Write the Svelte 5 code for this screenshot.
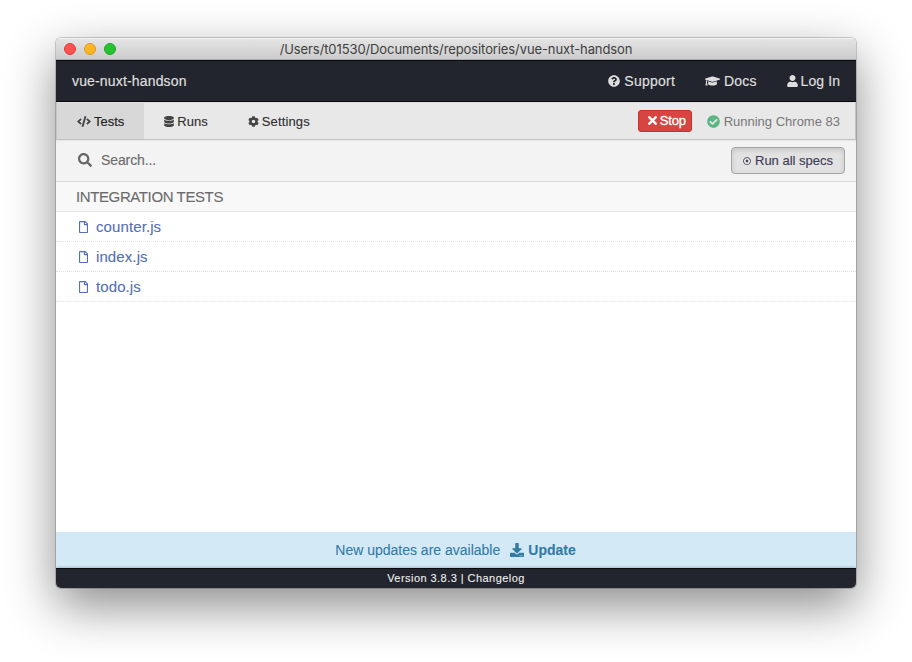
<script>
  const icons = {
    code: { box: '0 0 640 512', d: 'M278.9 511.500l-61-17.700c-6.400-1.800-10-8.500-8.200-14.900L346.200 8.700c1.800-6.400 8.500-10 14.900-8.200l61 17.700c6.400 1.800 10 8.500 8.200 14.900L293.800 503.300c-1.900 6.400-8.500 10.100-14.900 8.200zm-114-112.200l43.500-46.400c4.600-4.900 4.300-12.700-.8-17.200L117 256l90.600-79.700c5.100-4.500 5.500-12.300.8-17.200l-43.500-46.400c-4.500-4.800-12.100-5.100-17-.5L3.800 247.200c-5.100 4.700-5.100 12.800 0 17.500l144.100 135.100c4.900 4.600 12.500 4.400 17-.5zm327.200.6l144.100-135.100c5.100-4.700 5.100-12.800 0-17.500L492.100 112.100c-4.800-4.500-12.400-4.300-17 .5L431.600 159c-4.600 4.900-4.300 12.700.8 17.200L523 256l-90.600 79.700c-5.100 4.500-5.500 12.300-.8 17.200l43.500 46.400c4.500 4.900 12.100 5.100 17 .6z' },
    database: { box: '0 0 448 512', d: 'M448 73.143v45.714C448 159.143 347.667 192 224 192S0 159.143 0 118.857V73.143C0 32.857 100.333 0 224 0s224 32.857 224 73.143zM448 176v102.857C448 319.143 347.667 352 224 352S0 319.143 0 278.857V176c48.125 33.143 136.208 48.572 224 48.572S399.874 209.143 448 176zm0 160v102.857C448 479.143 347.667 512 224 512S0 479.143 0 438.857V336c48.125 33.143 136.208 48.572 224 48.572S399.874 369.143 448 336z' },
    cog: { box: '0 0 512 512', d: 'M487.4 315.7l-42.600-24.600c4.300-23.200 4.300-47 0-70.200l42.600-24.600c4.900-2.800 7.100-8.600 5.500-14-11.100-35.600-30-67.800-54.700-94.600-3.800-4.100-10-5.100-14.800-2.300L380.800 110c-17.900-15.400-38.500-27.300-60.800-35.100V25.800c0-5.600-3.900-10.500-9.400-11.700-36.700-8.200-74.300-7.800-109.200 0-5.500 1.200-9.400 6.100-9.400 11.700V75c-22.200 7.900-42.800 19.800-60.800 35.100L88.700 85.500c-4.900-2.800-11-1.900-14.800 2.300-24.700 26.700-43.600 58.900-54.700 94.600-1.700 5.400.6 11.200 5.500 14L67.300 221c-4.300 23.200-4.300 47 0 70.200l-42.600 24.600c-4.900 2.800-7.100 8.600-5.500 14 11.100 35.600 30 67.800 54.700 94.600 3.800 4.100 10 5.100 14.800 2.300l42.600-24.600c17.900 15.400 38.500 27.300 60.800 35.100v49.200c0 5.600 3.900 10.500 9.400 11.700 36.700 8.200 74.300 7.800 109.200 0 5.500-1.200 9.400-6.100 9.400-11.700v-49.200c22.200-7.900 42.800-19.800 60.800-35.100l42.600 24.600c4.900 2.800 11 1.900 14.800-2.300 24.700-26.700 43.600-58.900 54.700-94.600 1.500-5.500-.7-11.300-5.600-14.100zM256 336c-44.100 0-80-35.900-80-80s35.900-80 80-80 80 35.900 80 80-35.900 80-80 80z' },
    search: { box: '0 0 512 512', d: 'M505 442.700L405.300 343c-4.500-4.500-10.600-7-17-7H372c27.600-35.300 44-79.700 44-128C416 93.100 322.900 0 208 0S0 93.100 0 208s93.100 208 208 208c48.300 0 92.700-16.400 128-44v16.300c0 6.400 2.500 12.500 7 17l99.700 99.700c9.400 9.400 24.600 9.400 33.900 0l28.300-28.300c9.400-9.400 9.400-24.600.1-34zM208 336c-70.700 0-128-57.200-128-128 0-70.700 57.200-128 128-128 70.700 0 128 57.200 128 128 0 70.700-57.200 128-128 128z' },
    question: { box: '0 0 512 512', d: 'M504 256c0 136.997-111.043 248-248 248S8 392.997 8 256C8 119.083 119.043 8 256 8s248 111.083 248 248zM262.655 90c-54.497 0-89.255 22.957-116.549 63.758-3.536 5.286-2.353 12.415 2.715 16.258l34.699 26.310c5.205 3.947 12.621 3.008 16.665-2.122 17.864-22.658 30.113-35.797 57.303-35.797 20.429 0 45.698 13.148 45.698 32.958 0 14.976-12.363 22.667-32.534 33.976C247.128 238.528 216 254.941 216 296v4c0 6.627 5.373 12 12 12h56c6.627 0 12-5.373 12-12v-1.333c0-28.462 83.186-29.647 83.186-106.667 0-58.002-60.165-102-116.531-102zM256 338c-25.365 0-46 20.635-46 46 0 25.364 20.635 46 46 46s46-20.636 46-46c0-25.365-20.635-46-46-46z' },
    cap: { box: '0 0 640 512', d: 'M622.340 153.200L343.400 67.500c-15.200-4.670-31.600-4.670-46.790 0L17.660 153.200c-23.540 7.230-23.540 38.360 0 45.590l48.630 14.940c-10.670 13.190-17.230 29.280-17.880 46.900C38.780 266.150 32 276.110 32 288c0 10.780 5.680 19.850 13.860 25.650L20.330 428.530C18.110 438.520 25.710 448 35.940 448h56.110c10.240 0 17.840-9.480 15.620-19.470L82.140 313.650C90.320 307.850 96 298.780 96 288c0-11.570-6.470-21.250-15.660-26.870.76-15.020 8.440-28.300 20.690-36.720L296.600 284.500c9.060 2.780 26.440 6.250 46.790 0l278.950-85.700c23.550-7.240 23.550-38.360 0-45.600zM352.790 315.090c-28.530 8.760-52.840 3.920-65.590 0l-145.020-44.550L128 384c0 35.350 85.960 64 192 64s192-28.650 192-64l-14.180-113.470-145.030 44.560z' },
    user: { box: '0 0 448 512', d: 'M224 256c70.700 0 128-57.300 128-128S294.700 0 224 0 96 57.300 96 128s57.300 128 128 128zm89.600 32h-16.700c-22.200 10.200-46.900 16-72.900 16s-50.600-5.800-72.900-16h-16.700C60.200 288 0 348.200 0 422.400V464c0 26.500 21.500 48 48 48h352c26.500 0 48-21.500 48-48v-41.600c0-74.200-60.200-134.400-134.400-134.400z' },
    times: { box: '0 80 352 352', d: 'M242.720 256l100.070-100.070c12.280-12.280 12.280-32.190 0-44.480l-22.240-22.240c-12.280-12.280-32.190-12.280-44.480 0L176 189.280 75.930 89.210c-12.280-12.280-32.190-12.280-44.480 0L9.210 111.450c-12.280 12.280-12.280 32.190 0 44.480L109.280 256 9.210 356.070c-12.280 12.280-12.280 32.190 0 44.480l22.240 22.240c12.280 12.280 32.200 12.280 44.480 0L176 322.720l100.070 100.070c12.280 12.280 32.200 12.280 44.480 0l22.240-22.240c12.280-12.280 12.280-32.190 0-44.480L242.720 256z' },
    check: { box: '0 0 512 512', d: 'M504 256c0 136.967-111.033 248-248 248S8 392.967 8 256 119.033 8 256 8s248 111.033 248 248zM227.314 387.314l184-184c6.248-6.248 6.248-16.379 0-22.627l-22.627-22.627c-6.248-6.249-16.379-6.249-22.628 0L216 308.118l-70.059-70.059c-6.248-6.248-16.379-6.248-22.628 0l-22.627 22.627c-6.248 6.248-6.248 16.379 0 22.627l104 104c6.249 6.249 16.379 6.249 22.628.001z' },
    file: { box: '0 0 384 512', d: 'M369.900 97.900L286 14C277 5 264.800-.1 252.100-.1H48C21.500 0 0 21.500 0 48v416c0 26.500 21.500 48 48 48h288c26.500 0 48-21.500 48-48V131.900c0-12.700-5.100-25-14.100-34zM332.100 128H256V51.900l76.100 76.100zM48 464V48h160v104c0 13.300 10.700 24 24 24h104v288H48z' },
    dot: { box: '0 0 512 512', d: 'M256 56c110.532 0 200 89.451 200 200 0 110.532-89.451 200-200 200-110.532 0-200-89.451-200-200 0-110.532 89.451-200 200-200m0-48C119.033 8 8 119.033 8 256s111.033 248 248 248 248-111.033 248-248S392.967 8 256 8zm0 168c-44.183 0-80 35.817-80 80s35.817 80 80 80 80-35.817 80-80-35.817-80-80-80z' },
    download: { box: '0 0 512 512', d: 'M216 0h80c13.300 0 24 10.700 24 24v168h87.700c17.800 0 26.700 21.500 14.100 34.100L269.700 378.300c-7.500 7.500-19.800 7.500-27.300 0L90.100 226.100c-12.600-12.600-3.700-34.100 14.100-34.100H192V24c0-13.300 10.700-24 24-24zm296 376v112c0 13.300-10.700 24-24 24H24c-13.300 0-24-10.700-24-24V376c0-13.300 10.700-24 24-24h146.700l49 49c20.100 20.100 52.500 20.100 72.600 0l49-49H488c13.300 0 24 10.700 24 24zm-124 88c0-11-9-20-20-20s-20 9-20 20 9 20 20 20 20-9 20-20zm64 0c0-11-9-20-20-20s-20 9-20 20 9 20 20 20 20-9 20-20z' }
  };
  const specs = ['counter.js', 'index.js', 'todo.js'];
</script>

{#snippet icon(name)}
  <svg class="icon {name}" viewBox={icons[name].box} aria-hidden="true"><path d={icons[name].d} /></svg>
{/snippet}

<div class="desktop">
  <div class="window">
    <header class="titlebar">
      <div class="lights"><i class="close"></i><i class="min"></i><i class="max"></i></div>
      <span class="path">/Users/t01530/Documents/repositories/vue-nuxt-handson</span>
    </header>
    <nav class="navbar">
      <span class="project">vue-nuxt-handson</span>
      <div class="links">
        <a class="support">{@render icon('question')}<span>Support</span></a>
        <a class="docs">{@render icon('cap')}<span>Docs</span></a>
        <a class="login">{@render icon('user')}<span>Log In</span></a>
      </div>
    </nav>
    <div class="tabs">
      <a class="tab active">{@render icon('code')}<span>Tests</span></a>
      <a class="tab">{@render icon('database')}<span>Runs</span></a>
      <a class="tab settings">{@render icon('cog')}<span>Settings</span></a>
      <div class="status">
        <button class="stop">{@render icon('times')}<span>Stop</span></button>
        <span class="running">{@render icon('check')}<span>Running Chrome 83</span></span>
      </div>
    </div>
    <div class="toolbar">
      <label>{@render icon('search')}<span>Search...</span></label>
      <button class="run-all">{@render icon('dot')}<span>Run all specs</span></button>
    </div>
    <h2><span>INTEGRATION TESTS</span></h2>
    <ul>
      {#each specs as spec}
        <li>{@render icon('file')}<span>{spec}</span></li>
      {/each}
    </ul>
    <div class="update"><span>New updates are available</span>{@render icon('download')}<b>Update</b></div>
    <footer><span>Version 3.8.3 | Changelog</span></footer>
  </div>
</div>

<style>
  :global(body) { margin: 0; background: #fff; }
  .desktop { box-sizing: border-box; width: 912px; height: 662px; padding: 38px 56px; overflow: hidden; background: #fff; }
  .window {
    display: flex; flex-direction: column; width: 800px; height: 550px; overflow: hidden;
    border-radius: 5px; background: #fff; font: 14px "Liberation Sans", Arial, sans-serif;
    box-shadow: 0 0 0 1px rgba(0,0,0,.18), 0 18px 50px rgba(0,0,0,.46);
  }
  span, b { white-space: nowrap; }
  .icon { display: block; flex: none; fill: currentColor; }
  .titlebar {
    position: relative; box-sizing: border-box; height: 22px; flex: none; display: flex; align-items: center; justify-content: center;
    background: linear-gradient(#e4e4e4, #cccccc); border-top: 1px solid #f3f3f3; border-bottom: 1px solid #a9abac;
    font: 13px Inter, sans-serif; color: #404040;
  }
  .path { letter-spacing: -0.1px; }
  .lights { position: absolute; left: 8px; top: 4px; display: flex; gap: 8px; }
  .lights i { box-sizing: border-box; width: 12px; height: 12px; border-radius: 50%; border: 1px solid; }
  .lights .close { background: #fc5350; border-color: #df3d3b; }
  .lights .min { background: #fdb528; border-color: #dd9722; }
  .lights .max { background: #27c232; border-color: #1fa52a; }
  .navbar {
    box-sizing: border-box; height: 42px; flex: none; display: flex; align-items: center; justify-content: space-between;
    padding: 0 16px; background: #22252d; border-top: 1px solid #0c0d10; border-bottom: 1px solid #08090b; color: #dedede;
    -webkit-text-stroke: .2px #dedede;
  }
  .project { letter-spacing: .16px; }
  .links { display: flex; gap: 30px; }
  .links a { display: flex; align-items: center; gap: 3px; }
  .links .support { letter-spacing: .25px; gap: 4px; }
  .links .docs { letter-spacing: .15px; gap: 4px; }
  .login { letter-spacing: .08px; }
  .question { width: 12px; height: 12px; }
  .cap { width: 15px; height: 12px; }
  .user { width: 11px; height: 12px; }
  .tabs {
    box-sizing: border-box; height: 38px; flex: none; display: flex; background: #e8e8e8;
    border: 1px solid #c3c3c3; border-top-color: #dedede; font-size: 13px; color: #333;
    -webkit-text-stroke: .15px;
  }
  .tab { display: flex; align-items: center; gap: 3px; padding: 0 20px; }
  .active { background: #d8d8d8; color: #222; }
  .settings { letter-spacing: .14px; }
  .tab .icon { color: #444; }
  .code { width: 14px; height: 11px; }
  .database { width: 10px; height: 11px; }
  .cog { width: 11px; height: 11px; }
  .status { margin-left: auto; display: flex; align-items: center; gap: 15px; padding-right: 15px; -webkit-text-stroke: 0; }
  button { box-sizing: border-box; margin: 0; font: 13px "Liberation Sans", Arial, sans-serif; display: flex; align-items: center; }
  .stop { height: 22px; width: 54px; padding: 0 5px 2px 9px; gap: 3px; background: #d64541; border: 1px solid #c9302c; border-radius: 3px; color: #fff; letter-spacing: -.1px; -webkit-text-stroke: .3px #fff; }
  .times { width: 9px; height: 9px; }
  .running { display: flex; align-items: center; gap: 4px; color: #777; }
  .check { width: 13px; height: 13px; color: #5db584; }
  .toolbar {
    box-sizing: border-box; height: 42px; flex: none; display: flex; align-items: center; justify-content: space-between;
    padding: 0 11px 0 22px; background: #f3f3f3; border-bottom: 1px solid #d8d8d8; color: #6d6d6d;
    box-shadow: inset 0 2px 2px -1px rgba(0,0,0,.06);
  }
  label { display: flex; align-items: center; gap: 9px; padding-bottom: 2px; letter-spacing: -.1px; -webkit-text-stroke: .15px; }
  .search { width: 14px; height: 14px; color: #666; }
  .run-all { width: 114px; height: 27px; padding: 0 10px 0 11px; gap: 4px; border: 1px solid #a6a6a6; border-radius: 4px; background: #e2e2e2; box-shadow: inset 0 2px 5px rgba(0,0,0,.13); color: #3e3e59; -webkit-text-stroke: .15px; }
  .dot { width: 8px; height: 8px; }
  h2 { box-sizing: border-box; height: 30px; flex: none; margin: 0; padding: 0 20px; display: flex; align-items: center; background: #f8f8f8; border-bottom: 1px solid #e5e5e5; font-size: 15px; font-weight: 400; letter-spacing: -.39px; color: #6b6b6b; -webkit-text-stroke: .1px; }
  ul { flex: 1; margin: 0; padding: 0; list-style: none; }
  li { box-sizing: border-box; height: 30px; display: flex; align-items: center; gap: 8px; padding-left: 23px; border-bottom: 1px dotted #e2e2e2; color: #5370b4; font-size: 15px; letter-spacing: .1px; -webkit-text-stroke: .1px; }
  .file { width: 9px; height: 12px; }
  .update { box-sizing: border-box; height: 36px; flex: none; display: flex; align-items: center; justify-content: center; padding-right: 1px; background: #d4e9f6; color: #317ba5; -webkit-text-stroke: .1px; }
  .download { width: 14px; height: 14px; margin: 0 4px 0 10px; }
  footer { box-sizing: border-box; height: 20px; flex: none; display: flex; align-items: center; justify-content: center; padding-bottom: 2px; background: #22252d; border-top: 1px solid #08090b; box-shadow: 0 -1px 2px rgba(0,0,0,.2); color: #f0f0f0; font-size: 11px; letter-spacing: .45px; -webkit-text-stroke: .1px; }
</style>
